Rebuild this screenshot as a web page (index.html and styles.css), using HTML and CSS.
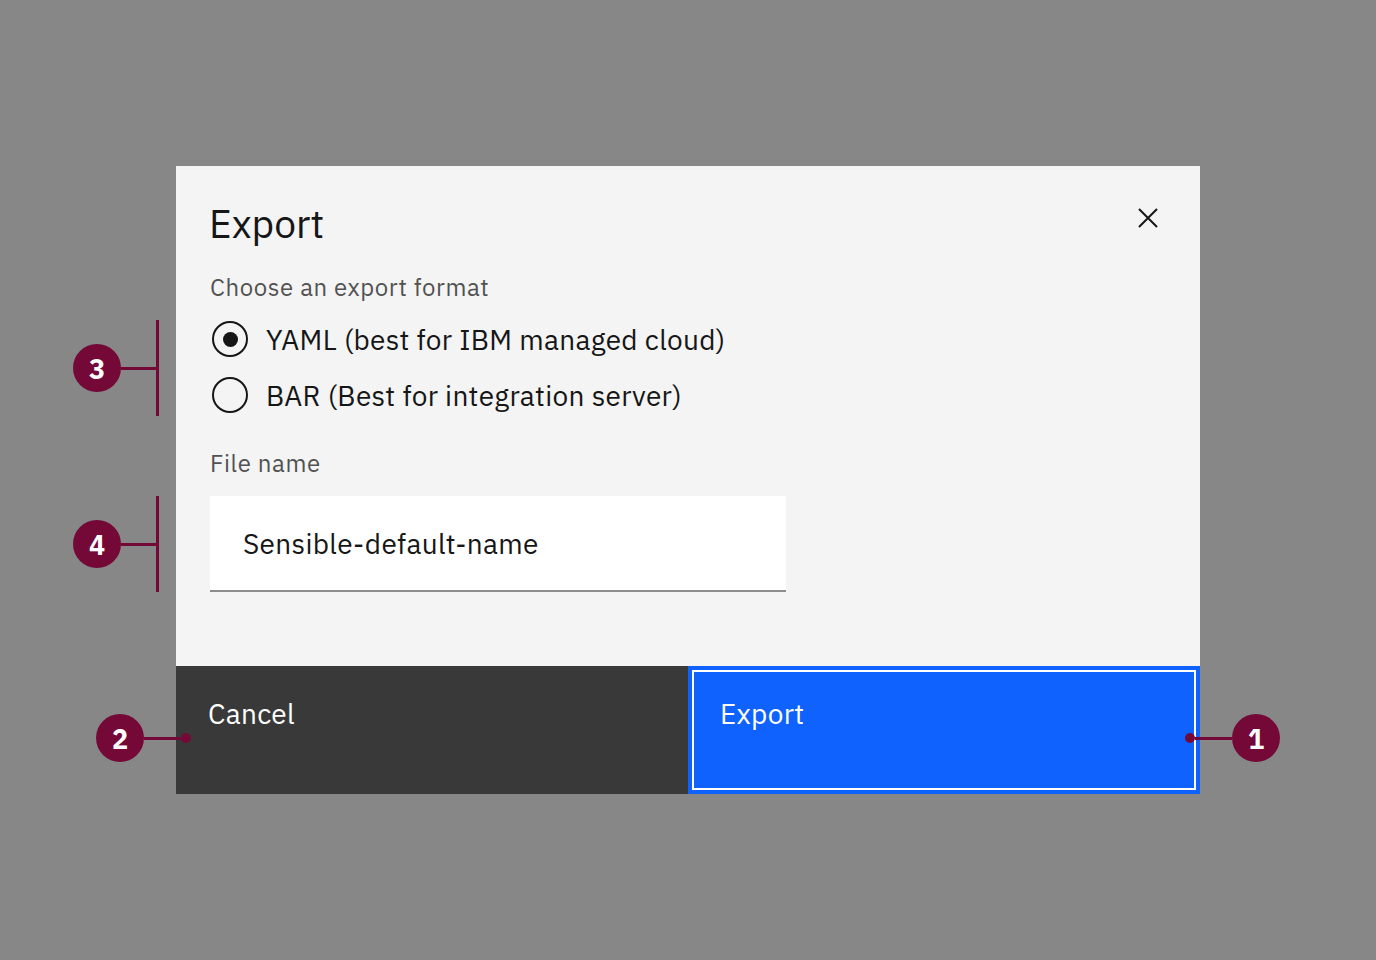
FILE: index.html
```html
<!DOCTYPE html>
<html lang="en">
<head>
<meta charset="utf-8">
<title>Export modal</title>
<link rel="stylesheet" href="styles.css">
</head>
<body>
<div class="stage">
  <div class="modal">
    <div class="modal-body">
      <div class="header">
        <h2 class="title">Export</h2>
        <button class="close" aria-label="Close">
          <svg width="20" height="20" viewBox="0 0 20 20"><path d="M1 1 L19 19 M19 1 L1 19" stroke="#161616" stroke-width="2" fill="none"/></svg>
        </button>
      </div>
      <div class="label">Choose an export format</div>
      <div class="radios">
        <label class="radio"><span class="dot checked"></span><span>YAML (best for IBM managed cloud)</span></label>
        <label class="radio"><span class="dot"></span><span>BAR (Best for integration server)</span></label>
      </div>
      <div class="label file-label">File name</div>
      <div class="input">Sensible-default-name</div>
    </div>
    <div class="footer">
      <button class="btn secondary">Cancel</button>
      <button class="btn primary">Export</button>
    </div>
  </div>

  <div class="callout c3"><span class="badge">3</span><span class="hline"></span><span class="vbar"></span></div>
  <div class="callout c4"><span class="badge">4</span><span class="hline"></span><span class="vbar"></span></div>
  <div class="callout c2"><span class="badge">2</span><span class="hline"></span><span class="pin"></span></div>
  <div class="callout c1"><span class="pin"></span><span class="hline"></span><span class="badge">1</span></div>
</div>
</body>
</html>
```

FILE: styles.css
```css
* { box-sizing: border-box; }
html, body { margin: 0; height: 100%; }
body {
  background: #878787;
  font-family: "IBM Plex Sans", Roboto, "Liberation Sans", sans-serif;
  display: flex;
  align-items: center;
  justify-content: center;
}
.stage { position: relative; width: 1024px; height: 628px; }
.modal {
  width: 1024px; height: 628px;
  background: #f4f4f4;
  display: flex; flex-direction: column;
}
.modal-body { flex: 1; padding: 30px 32px 0 34px; }
.header { display: flex; justify-content: space-between; align-items: flex-start; }
.title {
  margin: 0 0 0 -1px; font-weight: 400; font-size: 39px; line-height: 56px; color: #161616;
}
.close {
  border: 0; background: none; padding: 0; width: 40px; height: 40px;
  margin: 2px 0 0 0; display: flex; align-items: center; justify-content: center;
}
.label {
  font-size: 24px; line-height: 32px; color: #525252; letter-spacing: 0.6px;
  margin-top: 19px;
}
.radios { margin-top: 8px; display: flex; flex-direction: column; }
.radio {
  height: 56px; display: flex; align-items: center; gap: 18px;
  font-size: 28px; color: #161616; letter-spacing: 0.3px; margin-left: 2px;
}
.dot {
  width: 36px; height: 36px; border-radius: 50%; border: 2.5px solid #161616;
  display: flex; align-items: center; justify-content: center; flex: none;
}
.dot.checked::after {
  content: ""; width: 15px; height: 15px; border-radius: 50%; background: #161616;
}
.file-label { margin-top: 24px; }
.input {
  margin-top: 17px; width: 576px; height: 96px; background: #fff;
  border-bottom: 2px solid #8d8d8d;
  padding-left: 33px; display: flex; align-items: center;
  font-size: 28px; color: #161616; letter-spacing: 0.3px;
}
.footer { display: flex; height: 128px; }
.btn {
  flex: 1; border: 0; margin: 0; text-align: left; font-family: inherit;
  font-size: 28px; letter-spacing: 0.3px; color: #fff; padding: 32px 32px;
  display: flex; align-items: flex-start; line-height: 32px;
}
.secondary { background: #393939; }
.primary {
  background: #0f62fe;
  border: 3px solid #0f62fe;
  box-shadow: inset 0 0 0 1px #0f62fe, inset 0 0 0 3px #fff;
  padding: 29px 29px;
}
.callout { position: absolute; display: flex; align-items: center; }
.badge {
  width: 48px; height: 48px; border-radius: 50%; background: #740937;
  color: #fff; font-weight: 700; font-size: 27px;
  display: flex; align-items: center; justify-content: center; flex: none;
}
.hline { height: 3px; background: #740937; flex: none; }
.vbar { width: 3px; height: 96px; background: #740937; flex: none; }
.pin { width: 10px; height: 10px; border-radius: 50%; background: #740937; flex: none; }
.c3 { left: -103px; top: 154px; }
.c4 { left: -103px; top: 330px; }
.c3 .hline, .c4 .hline { width: 35px; }
.c2 { left: -80px; top: 548px; }
.c2 .hline { width: 37px; }
.c1 { left: 1009px; top: 548px; }
.c1 .hline { width: 37px; }
```
